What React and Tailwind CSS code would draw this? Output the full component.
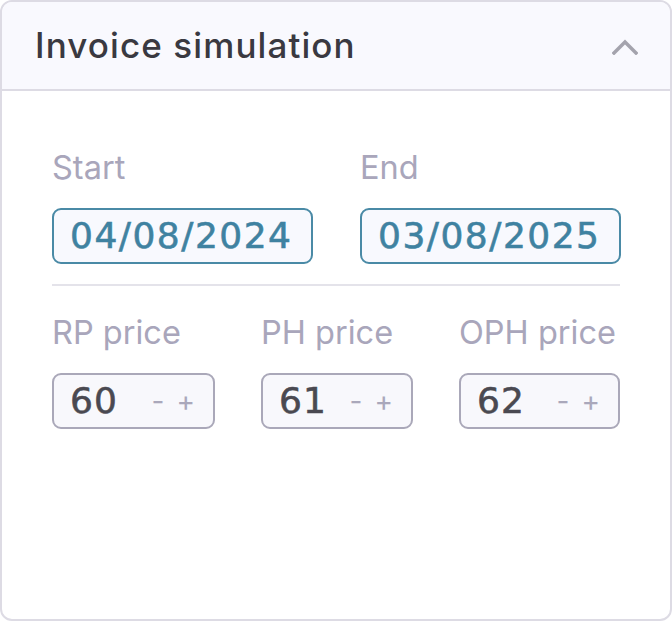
import React, { useState } from "react";

const labelCls = "text-[32.5px] leading-[38px] text-[#a9a6bb] font-['Inter',sans-serif]";

function DateField({ label, value }) {
    return (
        <div className="flex flex-col">
            <span className={labelCls}>{label}</span>
            <div className="mt-[21px] h-[56px] w-[261px] rounded-[9px] border-2 border-[#4a8aa6] bg-[#f8f9fe] flex items-center pl-[16px]">
                <span className="text-[36px] leading-none tracking-[1.5px] text-[#3f82a1] [-webkit-text-stroke:0.6px_#3f82a1] font-['DejaVu_Sans',sans-serif]">
                    {value}
                </span>
            </div>
        </div>
    );
}

function PriceField({ label, value, width }) {
    const [val, setVal] = useState(value);
    return (
        <div className="flex flex-col">
            <span className={labelCls}>{label}</span>
            <div
                className="mt-[21px] h-[56px] rounded-[9px] border-2 border-[#aaa8b9] bg-[#f8f8fc] flex items-center pl-[16px] pr-[18px] justify-between"
                style={{ width }}
            >
                <span className="text-[36px] leading-none tracking-[1px] text-[#4a4951] [-webkit-text-stroke:0.6px_#4a4951] font-['DejaVu_Sans',sans-serif]">
                    {val}
                </span>
                <div className="flex items-center gap-[12px] text-[28px] leading-none text-[#aaa8bb] font-['Inter',sans-serif]">
                    <button onClick={() => setVal(val - 1)}>-</button>
                    <button onClick={() => setVal(val + 1)}>+</button>
                </div>
            </div>
        </div>
    );
}

export default function App() {
    const [open, setOpen] = useState(true);

    return (
        <div className="w-[672px] h-[622px] bg-white">
            <div className="h-[621px] rounded-[12px] border-2 border-[#dddbe4] overflow-hidden flex flex-col">
                {/* Header */}
                <div className="h-[89px] shrink-0 bg-[#f9f9fe] border-b-2 border-[#dddbe4] flex items-center justify-between pl-[33px] pr-[32px]">
                    <h2 className="text-[35px] font-medium text-[#3a3941] tracking-[1.1px] font-['Inter',sans-serif]">
                        Invoice simulation
                    </h2>
                    <button onClick={() => setOpen(!open)} className="mt-[2px]">
                        <svg width="26" height="16" viewBox="0 0 26 16" fill="none">
                            <path d="M2 14 L13 3 L24 14" stroke="#a4a3ad" strokeWidth="3.5" strokeLinecap="square" />
                        </svg>
                    </button>
                </div>

                {/* Body */}
                <div className="px-[50px] pt-[58px]">
                    <div className="flex gap-[47px]">
                        <DateField label="Start" value="04/08/2024" />
                        <DateField label="End" value="03/08/2025" />
                    </div>

                    <div className="mt-[20px] h-[2px] bg-[#e4e3ea]" />

                    <div className="mt-[28px] flex gap-[46px]">
                        <PriceField label="RP price" value={60} width={163} />
                        <PriceField label="PH price" value={61} width={152} />
                        <PriceField label="OPH price" value={62} width={161} />
                    </div>
                </div>
            </div>
        </div>
    );
}
